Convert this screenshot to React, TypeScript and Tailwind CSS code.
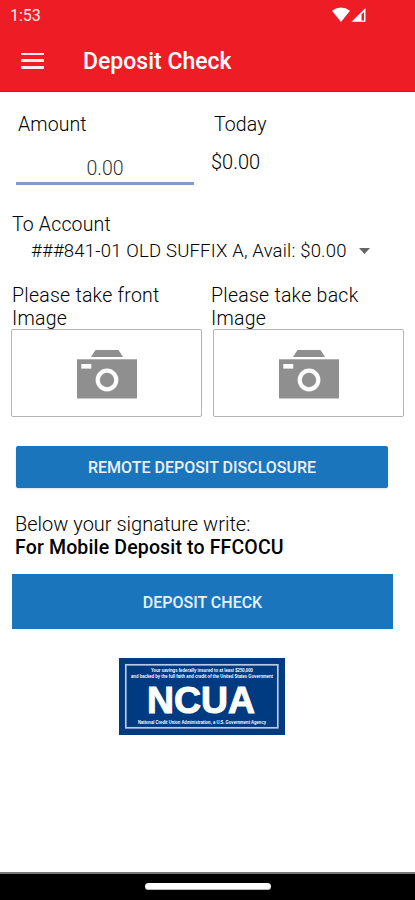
import React from "react";

interface PhotoSlotProps {
  label: string;
  labelClass: string;
}

const CameraIcon: React.FC = () => (
  <svg width="60" height="49" viewBox="0 0 60 49" className="block">
    <path d="M18.5 0H41.5L46 7H14Z" fill="#8f8f8f" />
    <rect y="9.3" width="60" height="39.2" fill="#8f8f8f" />
    <rect x="4.3" y="14" width="10" height="4.6" fill="#fff" />
    <circle cx="30" cy="30" r="9.3" fill="none" stroke="#fff" strokeWidth="4.2" />
  </svg>
);

const PhotoSlot: React.FC<PhotoSlotProps> = ({ label, labelClass }) => (
  <div className="w-[191px]">
    <p className={`text-[19.5px] leading-[23px] tracking-[0.25px] ${labelClass}`}>
      {label}
      <br />
      Image
    </p>
    <button
      aria-label={`${label} image`}
      className="-mt-px flex h-[88px] w-full items-center justify-center rounded-[2px] border border-[#b3b3b3] bg-white pt-[2px]"
    >
      <CameraIcon />
    </button>
  </div>
);

const NcuaLogo: React.FC = () => (
  <svg
    width="166"
    height="77"
    viewBox="0 0 166 77"
    fill="#fff"
    fontFamily="Liberation Sans, Arial, sans-serif"
    fontWeight="700"
    className="block"
  >
    <rect width="166" height="77" fill="#003a80" />
    <rect x="6.8" y="6.8" width="152" height="63" fill="none" stroke="#b9cbe3" strokeWidth="1.7" />
    <text x="32" y="14" fontSize="4.5" textLength="102" lengthAdjust="spacingAndGlyphs">
      Your savings federally insured to at least $250,000
    </text>
    <text x="12" y="19.7" fontSize="4.5" textLength="142" lengthAdjust="spacingAndGlyphs">
      and backed by the full faith and credit of the United States Government
    </text>
    <text
      x="28"
      y="54.5"
      fontSize="36"
      stroke="#fff"
      strokeWidth="1"
      textLength="108"
      lengthAdjust="spacingAndGlyphs"
    >
      NCUA
    </text>
    <text x="19" y="65.7" fontSize="4.5" textLength="128" lengthAdjust="spacingAndGlyphs">
      National Credit Union Administration, a U.S. Government Agency
    </text>
  </svg>
);

const App: React.FC = () => {
  return (
    <div className="flex h-[900px] w-[415px] flex-col overflow-hidden bg-white font-['Roboto',sans-serif] font-light text-black">
      <header className="h-[92px] shrink-0 border-b border-[#e60f16] bg-[#ee1d25] text-white">
        <div className="flex h-[30px] items-center justify-between pr-[48px] pl-[10px]">
          <span className="text-[16px] leading-[31px] font-normal text-[#ffe9e9]">1:53</span>
          <svg width="35" height="16" viewBox="0 0 35 16" className="block">
            <path d="M0 3.8Q9 -3 18 3.8L9 15Z" fill="#fff" />
            <path d="M33.5 1V14.8H19.5Z" fill="#fff" />
            <path d="M29.5 7.5L32 5V13.4H29.5Z" fill="#ee1d25" />
          </svg>
        </div>
        <div className="flex h-[61px] items-center pl-[21px]">
          <button aria-label="Menu" className="flex h-4 w-[23px] flex-col justify-between">
            <span className="h-[2.5px] bg-[#ffe9e9]" />
            <span className="h-[2.5px] bg-[#ffe9e9]" />
            <span className="h-[2.5px] bg-[#ffe9e9]" />
          </button>
          <h1 className="ml-[39px] pt-[2px] text-[23px] leading-[30px] font-medium">
            Deposit Check
          </h1>
        </div>
      </header>

      <main className="grow">
        <section className="flex pt-[21px]">
          <div className="ml-4 w-[178px]">
            <p className="pl-0.5 text-[19.5px] leading-6 tracking-[0.1px]">Amount</p>
            <div className="mt-[18px] h-[30px] border-b-[3px] border-[#819cca] text-center text-[19.5px] leading-[27px] text-[#333]">
              0.00
            </div>
          </div>
          <div className="ml-[17px]">
            <p className="pl-[3px] text-[19.5px] leading-6 tracking-[0.1px]">Today</p>
            <p className="mt-[13px] text-[20px] leading-6">$0.00</p>
          </div>
        </section>

        <section className="mt-[28px]">
          <p className="pl-3 text-[19.5px] leading-6 tracking-[0.15px]">To Account</p>
          <div className="flex h-[27px] items-center pl-[31px]">
            <span className="text-[18.5px] leading-6 tracking-[0.19px] whitespace-nowrap">
              ###841-01 OLD SUFFIX A, Avail: $0.00
            </span>
            <svg width="11" height="6" viewBox="0 0 11 6" className="ml-3">
              <path d="M0 0H11L5.5 6Z" fill="#666" />
            </svg>
          </div>
        </section>

        <section className="mt-5 flex gap-[11px] pl-[11px]">
          <PhotoSlot label="Please take front" labelClass="pl-px" />
          <PhotoSlot label="Please take back" labelClass="-ml-[2px]" />
        </section>

        <button className="mt-[29px] ml-4 block h-[42px] w-[372px] rounded-[2px] bg-[#1b75bc] text-[16px] leading-[43px] font-medium text-[#e8f1ff] shadow-sm">
          REMOTE DEPOSIT DISCLOSURE
        </button>

        <div className="mt-[25px] pl-[15px] text-[20px] leading-[23px]">
          <p>Below your signature write:</p>
          <p className="text-[19.5px] font-medium tracking-[0.15px]">For Mobile Deposit to FFCOCU</p>
        </div>

        <button className="mt-[15px] ml-3 block h-[55px] w-[381px] bg-[#1b75bc] text-[16px] leading-[57px] font-medium text-[#e8f1ff]">
          DEPOSIT CHECK
        </button>

        <div className="mt-[29px] ml-[119px]">
          <NcuaLogo />
        </div>
      </main>

      <footer className="flex h-[28px] shrink-0 justify-center border-t-2 border-[#777] bg-black pt-[9px]">
        <div className="h-[7px] w-[126px] rounded-full border-b border-[#bbb] bg-white" />
      </footer>
    </div>
  );
};

export default App;
